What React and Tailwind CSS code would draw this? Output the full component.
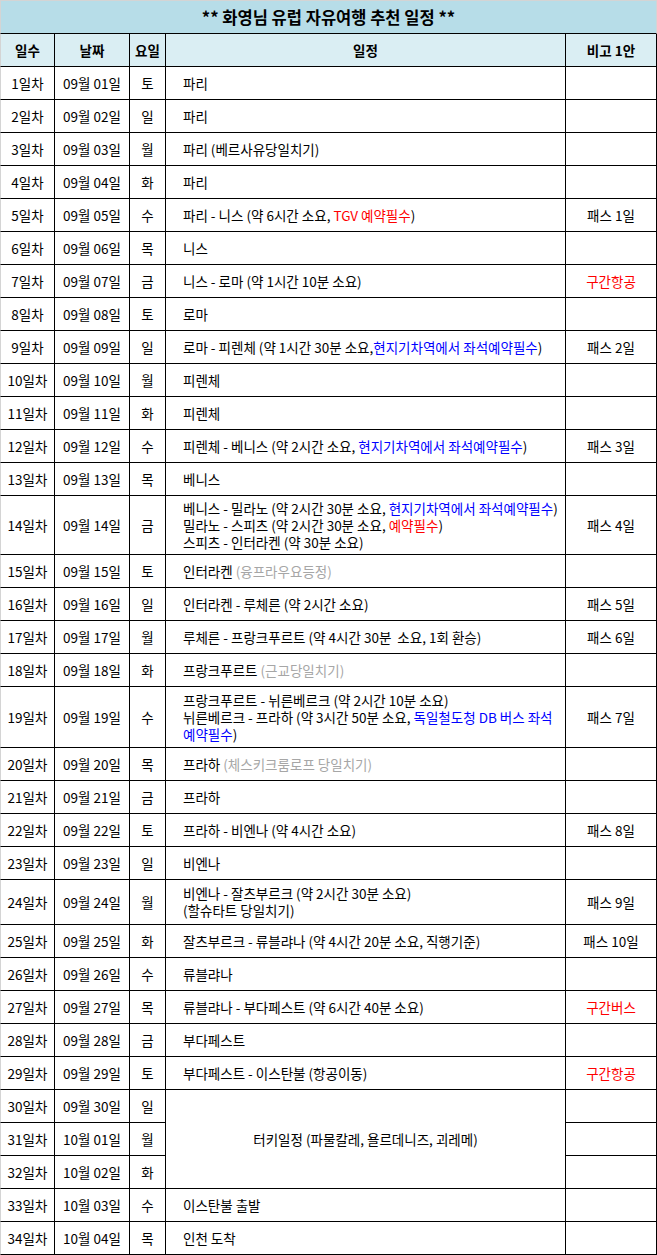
import React from 'react';

const DOW = ['토', '일', '월', '화', '수', '목', '금'];

const B = ({ children }) => <span className="text-[#0000ff]">{children}</span>;
const R = ({ children }) => <span className="text-[#ff0000]">{children}</span>;
const G = ({ children }) => <span className="text-[#a6a6a6]">{children}</span>;

// plan text per day, null for the merged Turkey rows
const PLAN = [
  '파리',
  '파리',
  '파리 (베르사유당일치기)',
  '파리',
  <>파리 - 니스 (약 6시간 소요, <R>TGV 예약필수</R>)</>,
  '니스',
  '니스 - 로마 (약 1시간 10분 소요)',
  '로마',
  <>로마 - 피렌체 (약 1시간 30분 소요,<B>현지기차역에서 좌석예약필수</B>)</>,
  '피렌체',
  '피렌체',
  <>피렌체 - 베니스 (약 2시간 소요, <B>현지기차역에서 좌석예약필수</B>)</>,
  '베니스',
  <>
    베니스 - 밀라노 (약 2시간 30분 소요, <B>현지기차역에서 좌석예약필수</B>)<br />
    밀라노 - 스피츠 (약 2시간 30분 소요, <R>예약필수</R>)<br />
    스피츠 - 인터라켄 (약 30분 소요)
  </>,
  <>인터라켄 <G>(융프라우요등정)</G></>,
  '인터라켄 - 루체른 (약 2시간 소요)',
  '루체른 - 프랑크푸르트 (약 4시간 30분  소요, 1회 환승)',
  <>프랑크푸르트 <G>(근교당일치기)</G></>,
  <>
    프랑크푸르트 - 뉘른베르크 (약 2시간 10분 소요)<br />
    뉘른베르크 - 프라하 (약 3시간 50분 소요, <B>독일철도청 DB 버스 좌석</B><br />
    <B>예약필수</B>)
  </>,
  <>프라하 <G>(체스키크룸로프 당일치기)</G></>,
  '프라하',
  '프라하 - 비엔나 (약 4시간 소요)',
  '비엔나',
  <>
    비엔나 - 잘츠부르크 (약 2시간 30분 소요)<br />
    (할슈타트 당일치기)
  </>,
  '잘츠부르크 - 류블랴나 (약 4시간 20분 소요, 직행기준)',
  '류블랴나',
  '류블랴나 - 부다페스트 (약 6시간 40분 소요)',
  '부다페스트',
  '부다페스트 - 이스탄불 (항공이동)',
  null,
  null,
  null,
  '이스탄불 출발',
  '인천 도착',
];

const NOTE = {
  5: '패스 1일',
  7: <R>구간항공</R>,
  9: '패스 2일',
  12: '패스 3일',
  14: '패스 4일',
  16: '패스 5일',
  17: '패스 6일',
  19: '패스 7일',
  22: '패스 8일',
  24: '패스 9일',
  25: '패스 10일',
  27: <R>구간버스</R>,
  29: <R>구간항공</R>,
};

const HEIGHT = { 14: 'h-[59px]', 19: 'h-[61px]', 24: 'h-[45px]' };

const cell = 'flex items-center border-r border-b border-black';

function dateOf(i) {
  if (i < 30) return `09월 ${String(i + 1).padStart(2, '0')}일`;
  return `10월 ${String(i - 29).padStart(2, '0')}일`;
}

export default function App() {
  return (
    <div
      className="w-[657px] bg-white text-[13.5px] leading-[17px] text-black"
      style={{ fontFamily: '"Noto Sans CJK KR", "Noto Sans", sans-serif' }}
    >
      <div className="grid grid-cols-[55px_75px_36px_400px_91px]">
        {/* title */}
        <div className="col-span-5 flex h-[34px] items-center justify-center border-t border-l border-r border-b border-t-[#d4d4d4] border-l-[#d4d4d4] border-r-[#d4d4d4] border-b-black bg-[#b7dde8] text-[16.5px] font-bold">
          ** 화영님 유럽 자유여행 추천 일정 **
        </div>

        {/* header */}
        {['일수', '날짜', '요일', '일정', '비고 1안'].map((h, i) => (
          <div
            key={h}
            className={`${cell} h-[33px] justify-center bg-[#daeef3] font-bold ${i === 0 ? 'border-l border-l-[#d4d4d4]' : ''}`}
          >
            {h}
          </div>
        ))}

        {PLAN.map((plan, i) => {
          const day = i + 1;
          const h = HEIGHT[day] || 'h-[33px]';
          return (
            <React.Fragment key={day}>
              <div className={`${cell} ${h} justify-center border-l border-l-[#d4d4d4]`}>{day}일차</div>
              <div className={`${cell} ${h} justify-center`}>{dateOf(i)}</div>
              <div className={`${cell} ${h} justify-center`}>{DOW[i % 7]}</div>
              {plan !== null ? (
                <div className={`${cell} ${h} pl-[17px] pr-1`}>
                  <div className="whitespace-pre-wrap">{plan}</div>
                </div>
              ) : day === 30 ? (
                <div className={`${cell} row-span-3 justify-center`}>
                  터키일정 (파물칼레, 욜르데니즈, 괴레메)
                </div>
              ) : null}
              <div className={`${cell} ${h} justify-center`}>{NOTE[day] || ''}</div>
            </React.Fragment>
          );
        })}
      </div>
    </div>
  );
}
